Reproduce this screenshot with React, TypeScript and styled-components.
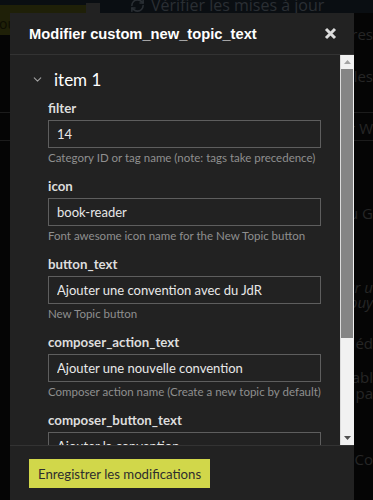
import React from 'react';
import styled, { createGlobalStyle } from 'styled-components';
import { ChevronDown, RefreshCw } from 'lucide-react';

const GlobalStyle = createGlobalStyle`
  html, body {
    margin: 0;
    padding: 0;
    background: #050505;
    height: 100%;
    overflow: hidden;
  }
  body {
    font-family: Lato, 'Open Sans', sans-serif;
  }
`;

// Backdrop (admin page behind the overlay)
const Page = styled.div`
  position: relative;
  height: 500px;
  overflow: hidden;
  background: #050505;
`;

const TopBar = styled.div`
  display: flex;
  align-items: flex-start;
  height: 13px;
  background: #0a0e12;
  overflow: visible;
`;

const OliveButton = styled.div`
  width: 86px;
  height: 30px;
  margin-top: 5px;
  flex-shrink: 0;
  background: #1f2008;
  color: #0d0d03;
  font-family: 'Open Sans', sans-serif;
  font-size: 14px;
  line-height: 38px;
  text-indent: -10px;
  overflow: hidden;
  white-space: nowrap;
`;

const GreySquare = styled.div`
  width: 14px;
  height: 10px;
  margin-top: 3px;
  background: #222222;
`;

const UpdateLink = styled.div`
  display: flex;
  align-items: center;
  gap: 6px;
  margin: -4px 0 0 30px;
  height: 18px;
  color: #2a2f34;
  font-family: 'Open Sans', sans-serif;
  font-size: 16px;
  white-space: nowrap;
`;

const SideTexts = styled.div`
  display: flex;
  flex-direction: column;
  align-items: flex-end;
  padding-top: 13px;
  font-family: 'Open Sans', sans-serif;
  font-size: 15px;
  color: #262626;
  line-height: 16px;
`;

const SideText = styled.div<{ $gap: number; $italic?: boolean; $boxed?: boolean }>`
  margin-top: ${(p) => p.$gap}px;
  font-style: ${(p) => (p.$italic ? 'italic' : 'normal')};
  line-height: ${(p) => (p.$italic ? 15 : 16)}px;
  text-align: right;
  white-space: nowrap;
  ${(p) =>
    p.$boxed &&
    `
    width: 100%;
    padding: 7px 0 4px;
    border-top: 1px solid #1c1c1c;
    border-bottom: 1px solid #1c1c1c;
  `}
`;

// Modal
const Modal = styled.div`
  position: absolute;
  left: 10px;
  top: 13px;
  width: 344px;
  height: 500px;
  display: flex;
  flex-direction: column;
  background: #222222;
  color: #dddddd;
`;

const Header = styled.div`
  display: flex;
  align-items: center;
  justify-content: space-between;
  height: 41px;
  padding: 0 17px 0 19px;
  border-bottom: 1px solid #333333;
  flex-shrink: 0;
`;

const Title = styled.h3`
  margin: 0;
  font-family: 'Liberation Sans', Arial, sans-serif;
  font-weight: 700;
  font-size: 14.7px;
  color: #ffffff;
`;

const CloseButton = styled.button`
  display: flex;
  padding: 0;
  border: 0;
  background: none;
  color: #dcdcdc;
  cursor: pointer;
`;

const BodyRow = styled.div`
  display: flex;
  height: 390px;
  flex-shrink: 0;
`;

const Scroller = styled.div`
  flex: 1;
  overflow: hidden;
  padding: 14px 19px 0 21px;
`;

const Scrollbar = styled.div`
  display: flex;
  flex-direction: column;
  width: 14px;
  background: #f1f1f1;
  border-left: 1px solid #dcdcdc;
  box-sizing: border-box;
`;

const ScrollArrow = styled.div<{ $down?: boolean }>`
  display: flex;
  align-items: center;
  justify-content: center;
  height: 14px;
  margin-top: ${(p) => (p.$down ? 'auto' : '0')};
  color: ${(p) => (p.$down ? '#505050' : '#a3a3a3')};
`;

const Thumb = styled.div`
  height: 269px;
  margin: 0 1px 0 0;
  background: #858585;
`;

const ItemHeader = styled.div`
  display: flex;
  align-items: center;
  gap: 10px;
  height: 20px;
  font-size: 17px;
  color: #ffffff;
  margin-bottom: 11px;
`;

const Fields = styled.div`
  display: flex;
  flex-direction: column;
  padding-left: 17px;
`;

const Field = styled.div`
  display: flex;
  flex-direction: column;
  margin-bottom: 13px;
`;

const Label = styled.label`
  font-weight: 700;
  font-size: 13.3px;
  line-height: 16px;
  color: #dddddd;
  margin-bottom: 4px;
`;

const Input = styled.input`
  box-sizing: border-box;
  width: 100%;
  height: 28px;
  padding: 0 8px;
  border: 1px solid #5e5e5e;
  background: #222222;
  color: #e8e8e8;
  font-family: Lato, 'Open Sans', sans-serif;
  font-size: 13px;
  outline: none;
`;

const Help = styled.div`
  margin-top: 3px;
  font-size: 11.5px;
  line-height: 14px;
  color: #8f8f8f;
  white-space: nowrap;
`;

const Footer = styled.div`
  flex: 1;
  border-top: 1px solid #333333;
  padding: 13px 19px;
`;

const SaveButton = styled.button`
  height: 29px;
  padding: 0 9px;
  border: 0;
  background: #d1d74a;
  color: #2e2e2e;
  font-family: Lato, 'Open Sans', sans-serif;
  font-size: 13.2px;
  cursor: pointer;
`;

const fields = [
  { name: 'filter', value: '14', help: 'Category ID or tag name (note: tags take precedence)' },
  { name: 'icon', value: 'book-reader', help: 'Font awesome icon name for the New Topic button' },
  { name: 'button_text', value: 'Ajouter une convention avec du JdR', help: 'New Topic button' },
  {
    name: 'composer_action_text',
    value: 'Ajouter une nouvelle convention',
    help: 'Composer action name (Create a new topic by default)',
  },
  {
    name: 'composer_button_text',
    value: 'Ajouter la convention',
    help: 'Composer button text (Create Topic by default)',
  },
];

const App: React.FC = () => {
  return (
    <>
      <GlobalStyle />
      <Page>
        <TopBar>
          <OliveButton>Bouton</OliveButton>
          <GreySquare />
          <UpdateLink>
            <RefreshCw size={15} strokeWidth={2.5} />
            Vérifier les mises à jour
          </UpdateLink>
        </TopBar>
        <SideTexts>
          <SideText $gap={0}>Fonctionnalités futures</SideText>
          <SideText $gap={26}>Modifier les</SideText>
          <SideText $gap={28} $boxed>Éditer par W</SideText>
          <SideText $gap={64}>Contenu G</SideText>
          <SideText $gap={59} $italic>
            par u
            <br />
            appuy
          </SideText>
          <SideText $gap={25}>Bout éd</SideText>
          <SideText $gap={18}>
            Activabl
            <br />
            une pa
          </SideText>
          <SideText $gap={50}>Co</SideText>
        </SideTexts>

        <Modal>
          <Header>
            <Title>Modifier custom_new_topic_text</Title>
            <CloseButton aria-label="Fermer">
              <svg width="13" height="13" viewBox="0 0 13 13">
                <path d="M2 2 L11 11 M11 2 L2 11" stroke="currentColor" strokeWidth="3" />
              </svg>
            </CloseButton>
          </Header>
          <BodyRow>
            <Scroller>
              <ItemHeader>
                <ChevronDown size={13} strokeWidth={2} color="#a0a0a0" />
                item 1
              </ItemHeader>
              <Fields>
                {fields.map((f) => (
                  <Field key={f.name}>
                    <Label>{f.name}</Label>
                    <Input defaultValue={f.value} />
                    <Help>{f.help}</Help>
                  </Field>
                ))}
              </Fields>
            </Scroller>
            <Scrollbar>
              <ScrollArrow>
                <svg width="7" height="4" viewBox="0 0 7 4">
                  <path d="M0 4 L3.5 0 L7 4Z" fill="currentColor" />
                </svg>
              </ScrollArrow>
              <Thumb />
              <ScrollArrow $down>
                <svg width="7" height="4" viewBox="0 0 7 4">
                  <path d="M0 0 L3.5 4 L7 0Z" fill="currentColor" />
                </svg>
              </ScrollArrow>
            </Scrollbar>
          </BodyRow>
          <Footer>
            <SaveButton>Enregistrer les modifications</SaveButton>
          </Footer>
        </Modal>
      </Page>
    </>
  );
};

export default App;
